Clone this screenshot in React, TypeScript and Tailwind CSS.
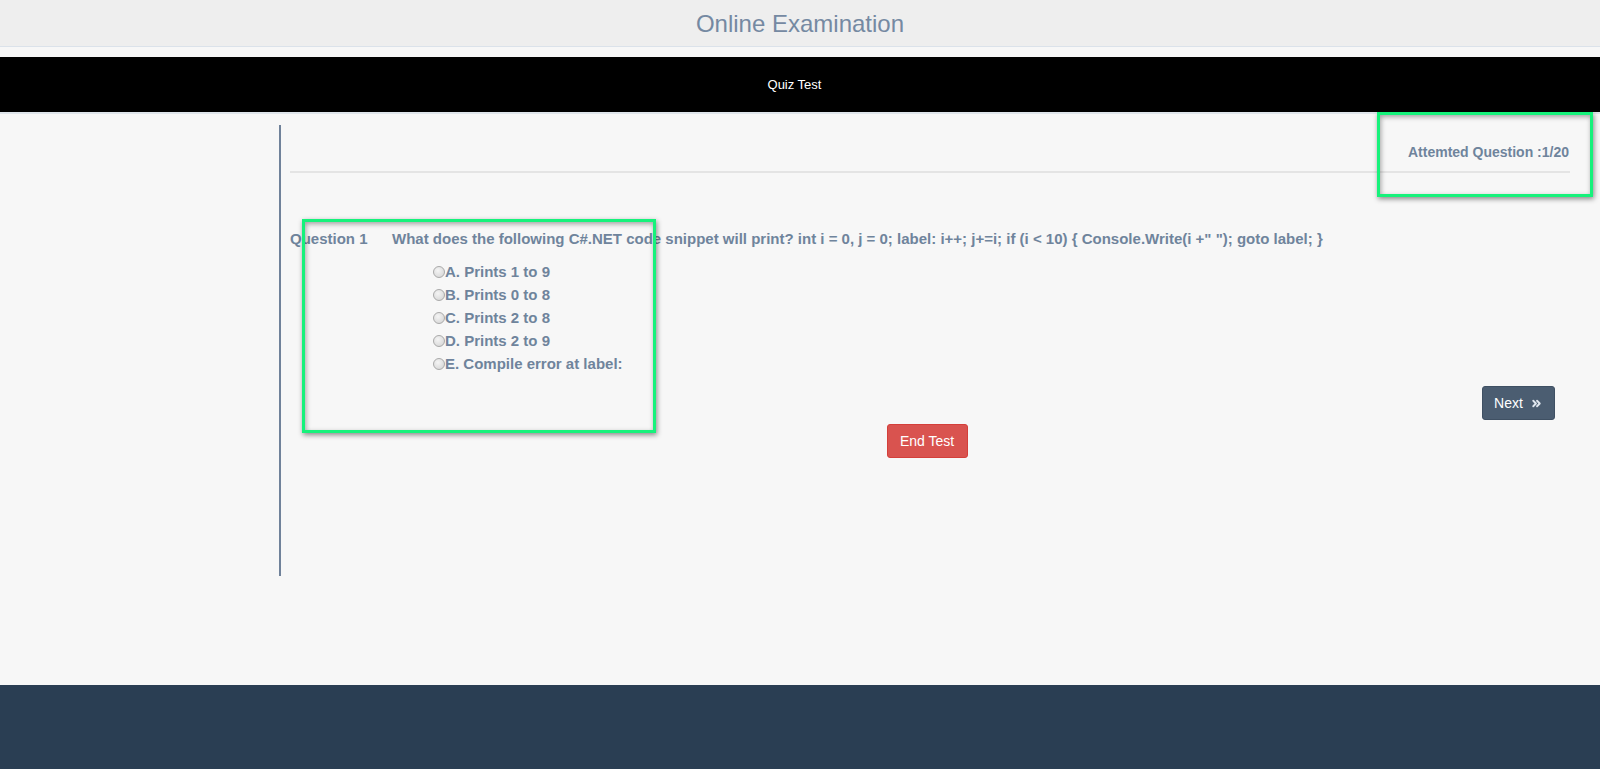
import * as React from "react";
import { ChevronsRight } from "lucide-react";

const options = [
  "A. Prints 1 to 9",
  "B. Prints 0 to 8",
  "C. Prints 2 to 8",
  "D. Prints 2 to 9",
  "E. Compile error at label:",
];

const Radio: React.FC = () => (
  <span
    className="inline-block w-[12px] h-[12px] rounded-full border border-[#a9a9a9]
      bg-[radial-gradient(circle_at_40%_35%,#f4f4f4,#d2d2d2)] shrink-0"
  />
);

const Highlight: React.FC<{ className: string }> = ({ className }) => (
  <div
    className={
      "absolute border-[3px] border-[#16f27b] pointer-events-none " +
      "shadow-[1px_2px_5px_rgba(0,0,0,0.45),inset_1px_2px_5px_rgba(0,0,0,0.35)] " +
      className
    }
  />
);

const App: React.FC = () => {
  const [answer, setAnswer] = React.useState<number | null>(null);

  return (
    <div className="relative min-h-screen flex flex-col bg-[#f7f7f7] font-['Liberation_Sans',Arial,sans-serif]">
      {/* Title */}
      <header className="h-[47px] shrink-0 flex items-center justify-center bg-[#eeeeee] border-b border-[#dbe2ea]">
        <h1 className="text-[24px] leading-none text-[#7589a2] mt-[1px]">
          Online Examination
        </h1>
      </header>

      {/* Quiz bar */}
      <div className="mt-[10px] h-[55px] shrink-0 flex items-center justify-center pr-[11px] bg-black text-white text-[13px]">
        Quiz Test
      </div>
      <div className="h-[2px] bg-[#dfe5eb]" />

      {/* Content */}
      <main className="flex-1 pt-[11px]">
        <div className="flex">
          <div className="w-[279px] shrink-0" />
          <div className="flex-1 h-[451px] border-l-2 border-[#70829a] pl-[9px] pr-[30px] text-[#6f849c] font-bold">
            <div className="h-[46px] pt-[17px] text-right text-[14px] leading-[20px] pr-[1px]">
              Attemted Question :1/20
            </div>
            <div className="border-t-2 border-[#e4e4e4]" />

            <div className="mt-[54px] flex text-[15px] leading-[23px]">
              <span className="w-[102px] shrink-0">Question 1</span>
              <span>
                What does the following C#.NET code snippet will print? int i =
                0, j = 0; label: i++; j+=i; if (i &lt; 10) {"{"}{" "}
                Console.Write(i +&quot; &quot;); goto label; {"}"}
              </span>
            </div>

            <div className="mt-[10px] pl-[143px] text-[15px]">
              {options.map((opt, i) => (
                <label
                  key={opt}
                  className="h-[23px] flex items-center cursor-pointer"
                  onClick={() => setAnswer(i)}
                >
                  {answer === i ? (
                    <span className="inline-block w-[12px] h-[12px] rounded-full border-[4px] border-[#7d8ea3] bg-white shrink-0" />
                  ) : (
                    <Radio />
                  )}
                  <span className="leading-[23px] -mt-[1px]">{opt}</span>
                </label>
              ))}
            </div>

            <div className="mt-[11px] flex justify-end pr-[15px]">
              <button className="h-[34px] w-[73px] flex items-center justify-center gap-[7px] rounded-[3px] bg-[#4b5d71] border border-[#3f5063] text-white text-[14px] font-normal">
                Next
                <ChevronsRight size={13} strokeWidth={3.5} className="text-[#dfe6ee]" />
              </button>
            </div>

            <div className="mt-[4px] flex justify-center pr-[6px]">
              <button className="h-[34px] w-[81px] rounded-[3px] bg-[#d9534f] border border-[#d43f3a] text-white text-[14px] font-normal">
                End Test
              </button>
            </div>
          </div>
        </div>
      </main>

      {/* Footer */}
      <footer className="h-[84px] shrink-0 bg-[#2a3e53]" />

      {/* Annotation highlights */}
      <Highlight className="left-[1377px] top-[112px] w-[216px] h-[85px]" />
      <Highlight className="left-[302px] top-[219px] w-[354px] h-[214px]" />
    </div>
  );
};

export default App;
